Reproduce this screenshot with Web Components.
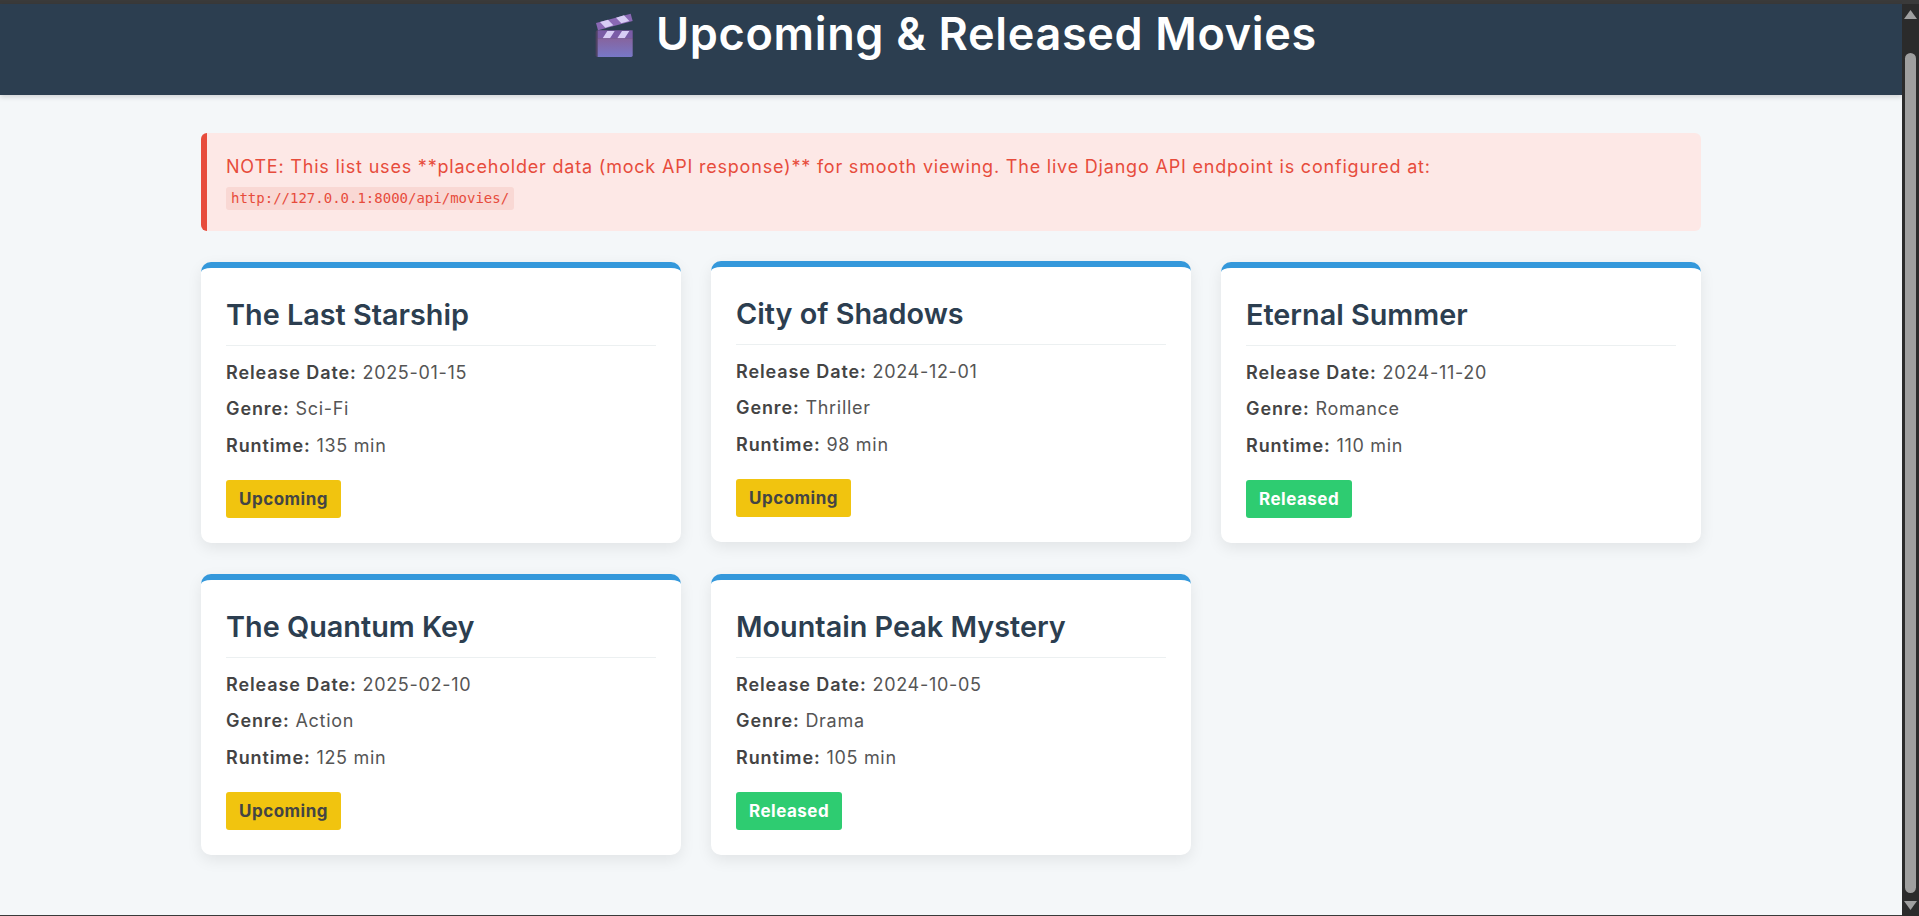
<!DOCTYPE html>
<html lang="en">
<head>
<meta charset="UTF-8" />
<title>Movies</title>
<style>
  html, body { margin: 0; height: 916px; overflow: hidden; background: #f4f7f9; }
  body { font-family: "Inter", "Liberation Sans", sans-serif; }
  #shell { display: flex; height: 916px; }
  #page { flex: 1; min-width: 0; border-top: 4px solid #3a3a3a; border-bottom: 1px solid #3a3a3a; }
</style>
</head>
<body>
<div id="shell">
  <div id="page">
    <page-header>Upcoming &amp; Released Movies</page-header>
    <movie-list>
      <mock-note slot="note" url="http://127.0.0.1:8000/api/movies/">NOTE: This list uses **placeholder data (mock API response)** for smooth viewing. The live Django API endpoint is configured at:</mock-note>
      <movie-card title="The Last Starship" date="2025-01-15" genre="Sci-Fi" runtime="135" status="Upcoming"></movie-card>
      <movie-card title="City of Shadows" date="2024-12-01" genre="Thriller" runtime="98" status="Upcoming" raised></movie-card>
      <movie-card title="Eternal Summer" date="2024-11-20" genre="Romance" runtime="110" status="Released"></movie-card>
      <movie-card title="The Quantum Key" date="2025-02-10" genre="Action" runtime="125" status="Upcoming"></movie-card>
      <movie-card title="Mountain Peak Mystery" date="2024-10-05" genre="Drama" runtime="105" status="Released"></movie-card>
    </movie-list>
  </div>
  <fake-scrollbar></fake-scrollbar>
</div>

<script>
  "use strict";
  const FONT = '"Inter", "Liberation Sans", sans-serif';

  class PageHeader extends HTMLElement {
    constructor() {
      super();
      this.attachShadow({ mode: "open" }).innerHTML = `
        <style>
          :host { display: block; height: 91px; background: #2c3e50; color: #fff; box-shadow: 0 2px 5px rgba(0,0,0,.15); }
          h1 { margin: 0; display: flex; justify-content: center; align-items: center; gap: 23px; height: 50px; padding: 5px 0 0 10px;
               font: 600 45px/50px ${FONT}; letter-spacing: .66px; }
          svg { width: 38px; height: 45px; display: block; margin-top: 2px; }
        </style>
        <h1>
          <svg viewBox="33 20 114 135">
            <defs><linearGradient id="cl" x1="0" y1="0" x2="0" y2="1"><stop offset="0" stop-color="#86649e"/><stop offset="1" stop-color="#7878c8"/></linearGradient></defs>
            <path d="M36 50 L140 22 L146 44 L42 72 Z" fill="#8a68b4"/>
            <path d="M48 47 L72 40 L88 57 L64 64 Z M96 34 L120 27 L136 44 L112 51 Z" fill="#d8cdf5"/>
            <rect x="35" y="72" width="110" height="80" rx="5" fill="#4e4262"/>
            <rect x="41" y="72" width="105" height="24" fill="#7a5ca6"/>
            <path d="M56 96 L70 74 L92 74 L78 96 Z M100 96 L114 74 L136 74 L122 96 Z" fill="#d8cdf5"/>
            <path d="M41 96 H146 V147 Q146 152 141 152 H41 Z" fill="url(#cl)"/>
          </svg>
          <span><slot></slot></span>
        </h1>`;
    }
  }

  class MovieList extends HTMLElement {
    constructor() {
      super();
      this.attachShadow({ mode: "open" }).innerHTML = `
        <style>
          :host { display: block; width: 1500px; margin: 38px auto 0; }
          .grid { display: grid; grid-template-columns: repeat(3, 480px); column-gap: 30px; row-gap: 31px; margin-top: 31px; }
        </style>
        <slot name="note"></slot>
        <div class="grid"><slot></slot></div>`;
    }
  }

  class MockNote extends HTMLElement {
    constructor() {
      super();
      this.attachShadow({ mode: "open" }).innerHTML = `
        <style>
          :host { display: block; box-sizing: border-box; height: 98px; padding: 19px 20px 0 19px; background: #fde8e6;
                  border-left: 6px solid #e74c3c; border-radius: 6px; color: #e74c3c; font: 400 18px/30px ${FONT}; letter-spacing: .8px; }
          code { display: inline-block; margin-top: 2.5px; background: #f9d8d4; border-radius: 3px; padding: 0 5px; font: 14px/23px "DejaVu Sans Mono", monospace; letter-spacing: 0; }
        </style>
        <div><slot></slot></div>
        <code></code>`;
      this.shadowRoot.querySelector("code").textContent = this.getAttribute("url");
    }
  }

  class MovieCard extends HTMLElement {
    constructor() {
      super();
      const upcoming = this.getAttribute("status") === "Upcoming";
      this.attachShadow({ mode: "open" }).innerHTML = `
        <style>
          :host { display: block; box-sizing: border-box; height: 281px; padding: 25px; background: #fff; border-top: 6px solid #3498db;
                  border-radius: 10px; box-shadow: 0 5px 15px rgba(0,0,0,.08); color: #555; font: 400 18px/24px ${FONT}; letter-spacing: .7px; }
          :host([raised]) { transform: translateY(-1px); }
          h2 { margin: 0 0 14.5px; padding: 1px 0 9px; border-bottom: 1px solid #ecf0f1; color: #2c3e50; font: 600 28.8px/42px ${FONT}; letter-spacing: 0; }
          p { margin: 0 0 12.6px; }
          b { font-weight: 600; color: #444; letter-spacing: .9px; }
          .tag { display: inline-block; margin-top: 9.5px; padding: 0 13px; height: 38px; line-height: 38px; border-radius: 3px; font-weight: 700; font-size: 17px; letter-spacing: .5px;
                 background: ${upcoming ? "#f1c40f" : "#2ecc71"}; color: ${upcoming ? "#444" : "#fff"}; }
        </style>
        <h2>${this.getAttribute("title")}</h2>
        <p><b>Release Date:</b> ${this.getAttribute("date")}</p>
        <p><b>Genre:</b> ${this.getAttribute("genre")}</p>
        <p><b>Runtime:</b> ${this.getAttribute("runtime")} min</p>
        <span class="tag">${this.getAttribute("status")}</span>`;
    }
  }

  class FakeScrollbar extends HTMLElement {
    constructor() {
      super();
      this.attachShadow({ mode: "open" }).innerHTML = `
        <style>
          :host { flex: none; width: 17px; height: 916px; box-sizing: border-box; background: #2b2b2b; display: flex; flex-direction: column; align-items: center; border-top: 4px solid #3a3a3a; }
          svg { flex: none; display: block; width: 13px; height: 10px; }
          .thumb { flex: 1; width: 11px; margin: 33px 0 8px; background: #9f9f9f; border-radius: 6px; }
        </style>
        <svg style="margin-top:6px" viewBox="0 0 13 10"><path d="M6.5 0 L13 9 H0 Z" fill="#a0a0a0"/></svg>
        <div class="thumb"></div>
        <svg style="margin-bottom:5px" viewBox="0 0 13 10"><path d="M0 0 H13 L6.5 9 Z" fill="#a0a0a0"/></svg>`;
    }
  }

  customElements.define("page-header", PageHeader);
  customElements.define("movie-list", MovieList);
  customElements.define("mock-note", MockNote);
  customElements.define("movie-card", MovieCard);
  customElements.define("fake-scrollbar", FakeScrollbar);
</script>
</body>
</html>
